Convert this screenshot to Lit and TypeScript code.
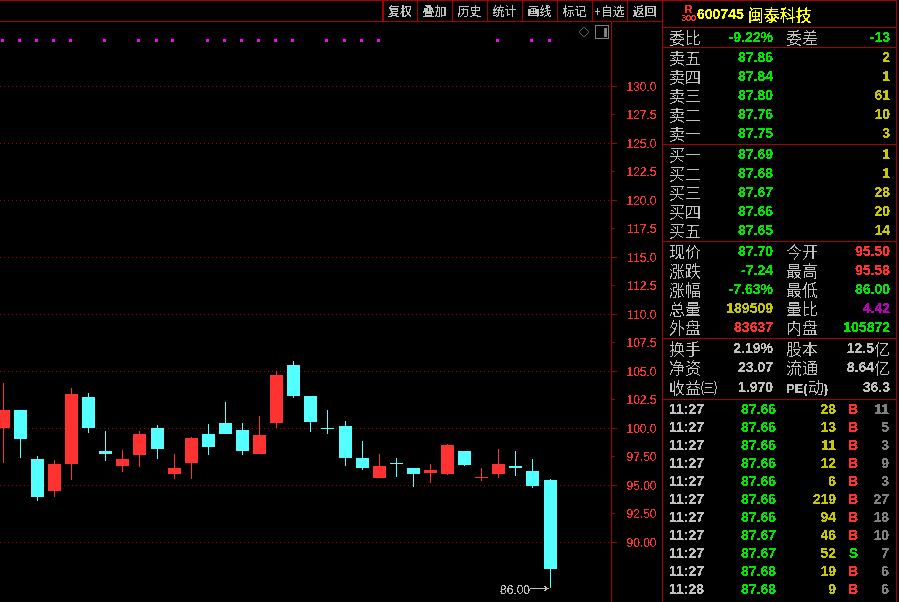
import { LitElement, html, css, svg } from "lit";
import { customElement } from "lit/decorators.js";

type C = [number, number, number, number, number, 0 | 1];
// x-left, body top, body bottom, wick top, wick bottom, red?
const candles: C[] = [
  [-3, 410, 428, 383, 463, 1],
  [14, 410, 439, 410, 458, 0],
  [31, 459, 497, 456, 501, 0],
  [48, 464, 491, 460, 497, 1],
  [65, 394, 464, 388, 480, 1],
  [82, 397, 428, 393, 433, 0],
  [99, 451, 454, 431, 461, 0],
  [116, 459, 466, 450, 472, 1],
  [133, 434, 455, 431, 467, 1],
  [151, 428, 449, 425, 459, 0],
  [168, 468, 474, 454, 479, 1],
  [185, 438, 463, 437, 479, 1],
  [202, 434, 447, 424, 455, 0],
  [219, 423, 434, 402, 434, 0],
  [236, 430, 451, 423, 455, 0],
  [253, 435, 454, 416, 454, 1],
  [270, 375, 423, 371, 428, 1],
  [287, 365, 396, 361, 398, 0],
  [304, 396, 422, 396, 432, 0],
  [321, 428, 429, 410, 434, 0],
  [339, 426, 458, 421, 466, 0],
  [356, 458, 468, 441, 470, 0],
  [373, 466, 478, 454, 478, 1],
  [390, 463, 464, 458, 477, 0],
  [407, 468, 474, 468, 487, 0],
  [424, 470, 473, 464, 483, 1],
  [441, 445, 474, 444, 475, 1],
  [458, 451, 465, 451, 466, 0],
  [475, 477, 478, 468, 481, 1],
  [492, 464, 474, 449, 478, 1],
  [509, 466, 468, 451, 476, 0],
  [526, 471, 486, 459, 488, 0],
  [544, 480, 569, 479, 588, 0],
];
const dots = [1, 18, 35, 52, 69, 103, 137, 155, 171, 206, 223, 240, 257, 274, 291, 325, 343, 360, 377, 496, 530, 548];
const axis = ["130.0", "127.5", "125.0", "122.5", "120.0", "117.5", "115.0", "112.5", "110.0", "107.5", "105.0", "102.5", "100.0", "97.50", "95.00", "92.50", "90.00"];
const tools = ["复权", "叠加", "历史", "统计", "画线", "标记", "+自选", "返回"];

const sell: [string, string, string][] = [
  ["卖五", "87.86", "2"], ["卖四", "87.84", "1"], ["卖三", "87.80", "61"], ["卖二", "87.76", "10"], ["卖一", "87.75", "3"],
];
const buy: [string, string, string][] = [
  ["买一", "87.69", "1"], ["买二", "87.68", "1"], ["买三", "87.67", "28"], ["买四", "87.66", "20"], ["买五", "87.65", "14"],
];
const stats: [string, string, string, string, string, string][] = [
  ["现价", "87.70", "g", "今开", "95.50", "r"],
  ["涨跌", "-7.24", "g", "最高", "95.58", "r"],
  ["涨幅", "-7.63%", "g", "最低", "86.00", "g"],
  ["总量", "189509", "y", "量比", "4.42", "m"],
  ["外盘", "83637", "r", "内盘", "105872", "g"],
];
const fin: [string, string, string, string][] = [
  ["换手", "2.19%", "股本", "12.5亿"],
  ["净资", "23.07", "流通", "8.64亿"],
  ["收益㈢", "1.970", "PE(动)", "36.3"],
];
const trades: [string, string, string, string, string][] = [
  ["11:27", "87.66", "28", "B", "11"], ["11:27", "87.66", "13", "B", "5"], ["11:27", "87.66", "11", "B", "3"],
  ["11:27", "87.66", "12", "B", "9"], ["11:27", "87.66", "6", "B", "3"], ["11:27", "87.66", "219", "B", "27"],
  ["11:27", "87.66", "94", "B", "18"], ["11:27", "87.67", "46", "B", "10"], ["11:27", "87.67", "52", "S", "7"],
  ["11:27", "87.68", "19", "B", "6"], ["11:28", "87.68", "9", "B", "6"],
];

@customElement("app-root")
export class AppRoot extends LitElement {
  static styles = css`
    :host {
      display: block;
      width: 899px;
      height: 602px;
      background: #000;
      overflow: hidden;
      --line: #a80000;
      font-family: "Noto Sans CJK SC", sans-serif;
    }
    .defs { position: absolute; width: 0; height: 0; }
    .frame {
      display: flex;
      height: 601px;
      width: 897px;
      border-top: 1px solid var(--line);
    }
    .left {
      width: 662px;
      display: flex;
      flex-direction: column;
      border-right: 1px solid var(--line);
    }
    .toolbar {
      height: 20px;
      display: flex;
      justify-content: flex-end;
      border-bottom: 1px solid var(--line);
      flex: none;
    }
    .tool {
      box-sizing: border-box;
      width: 35px;
      padding-right: 1px;
      border-left: 1px solid var(--line);
      color: #c0c0c0;
      font-size: 12px;
      line-height: 20px;
      text-align: center;
      white-space: nowrap;
      filter: url(#crisp);
    }
    .tool:first-child { border-left-width: 2px; }
    .chart { display: block; flex: 1; }
    .chart text { font-family: "Liberation Sans", sans-serif; font-size: 12px; }
    .axis-t { fill: #ff3232; }
    .low-t { fill: #c0c0c0; }
    .panel {
      width: 233px;
      display: flex;
      flex-direction: column;
      border-right: 1px solid var(--line);
    }
    .sec { border-bottom: 1px solid var(--line); flex: none; filter: url(#crisp); }
    .head {
      height: 26px;
      display: flex;
      align-items: center;
      color: #ffff00;
      padding-left: 18px;
    }
    .badge {
      width: 15px;
      display: flex;
      flex-direction: column;
      align-items: center;
      color: #ff3232;
      font-family: "Liberation Sans", sans-serif;
      line-height: 9px;
      margin-right: 1px;
    }
    .badge b { font-size: 11px; }
    .badge span { font-size: 9px; letter-spacing: -0.2px; }
    .code { font: 700 14px/1 "Liberation Sans", sans-serif; }
    .name { font-size: 16px; margin-left: 4px; line-height: 20px; }
    .pad { padding-bottom: 1px; }
    .pad3 { padding-bottom: 3px; }
    .row {
      height: 19px;
      display: grid;
      grid-template-columns: 104px 104px;
      column-gap: 13px;
      padding-left: 6px;
    }
    .cell {
      display: flex;
      justify-content: space-between;
      align-items: center;
      font-size: 16px;
      color: #c0c0c0;
      white-space: nowrap;
    }
    .lab { line-height: 19px; font-weight: 300; }
    .lat { font: 700 13px/19px "Liberation Sans", sans-serif; }
    .num { font: 700 14px/19px "Liberation Sans", sans-serif; }
    .yi { font: 300 16px/19px "Noto Sans CJK SC", sans-serif; }
    .mix { display: inline-flex; align-items: center; }
    .g { color: #00e600; }
    .r { color: #ff3232; }
    .y { color: #c8c800; }
    .m { color: #c000c0; }
    .w { color: #c0c0c0; }
    .k { color: #808080; }
    .tr {
      height: 18px;
      display: grid;
      grid-template-columns: 70px 37px 60px 22px 31px;
      padding-left: 6px;
      font: 700 14px/18px "Liberation Sans", sans-serif;
      color: #c0c0c0;
      filter: url(#crisp);
    }
    .tr > span:not(:first-child) { text-align: right; }
  `;

  private chart() {
    const H = 580;
    return html`<svg class="chart" width="662" height="${H}" viewBox="0 22 662 ${H}" shape-rendering="crispEdges">
      <line x1="611.5" y1="22" x2="611.5" y2="602" stroke="#a80000" />
      ${[86, 143, 200, 257, 314, 371, 428, 485, 542].map(
        (y) => svg`<line x1="0" y1="${y + 0.5}" x2="611" y2="${y + 0.5}" stroke="#a80000" stroke-dasharray="1 3" />`
      )}
      ${axis.map((t, i) => {
        const y = 86 + i * 28.5;
        const ly = Math.floor(y);
        const len = i % 2 === 0 ? 5 : 3;
        return svg`<line x1="612" y1="${ly + 0.5}" x2="${612 + len}" y2="${ly + 0.5}" stroke="#a80000" />
          <text class="axis-t" x="656.5" y="${ly + 5}" text-anchor="end" filter="url(#crisp)">${t}</text>`;
      })}
      ${dots.map((x) => svg`<rect x="${x}" y="39" width="3" height="3" fill="#ff00ff" />`)}
      ${candles.map(([x, t, b, wt, wb, red]) => {
        const col = red ? "#ff3232" : "#54ffff";
        return svg`<rect x="${x + 6}" y="${wt}" width="1" height="${wb - wt}" fill="${col}" />
          <rect x="${x}" y="${t}" width="13" height="${b - t}" fill="${col}" />`;
      })}
      <polygon points="584,27 589,32 584,37 579,32" fill="none" stroke="#666" shape-rendering="auto" />
      <rect x="595.5" y="25.5" width="13" height="13" fill="none" stroke="#808080" />
      <rect x="604" y="28" width="3" height="9" fill="#808080" />
      <text class="low-t" x="500" y="594" filter="url(#crisp)">86.00</text>
      <path d="M530 588.5H548M544 586l4 2.5-4 2.5" fill="none" stroke="#c0c0c0" />
    </svg>`;
  }

  private book(rows: [string, string, string][]) {
    return rows.map(
      ([l, p, q]) => html`<div class="row">
        <div class="cell"><span class="lab">${l}</span><span class="num g">${p}</span></div>
        <div class="cell"><span></span><span class="num y">${q}</span></div>
      </div>`
    );
  }

  private finLabel(c: string) {
    return c.startsWith("PE") ? html`<span class="lat">PE(</span>动<span class="lat">)</span>` : c;
  }

  render() {
    return html`
      <svg class="defs" aria-hidden="true">
        <filter id="crisp" x="0" y="0" width="100%" height="100%" color-interpolation-filters="sRGB">
          <feComponentTransfer>
            <feFuncA type="discrete" tableValues="0 0 1 1 1"></feFuncA>
          </feComponentTransfer>
        </filter>
      </svg>
      <div class="frame">
        <div class="left">
          <div class="toolbar">${tools.map((t) => html`<div class="tool">${t}</div>`)}</div>
          ${this.chart()}
        </div>
        <div class="panel">
          <div class="sec head">
            <div class="badge"><b>R</b><span>300</span></div>
            <span class="code">600745</span><span class="name">闽泰科技</span>
          </div>
          <div class="sec">
            <div class="row">
              <div class="cell"><span class="lab">委比</span><span class="num g">-9.22%</span></div>
              <div class="cell"><span class="lab">委差</span><span class="num g">-13</span></div>
            </div>
          </div>
          <div class="sec pad">${this.book(sell)}</div>
          <div class="sec pad">${this.book(buy)}</div>
          <div class="sec pad">
            ${stats.map(
              ([a, b, c, d, e, f]) => html`<div class="row">
                <div class="cell"><span class="lab">${a}</span><span class="num ${c}">${b}</span></div>
                <div class="cell"><span class="lab">${d}</span><span class="num ${f}">${e}</span></div>
              </div>`
            )}
          </div>
          <div class="sec pad3">
            ${fin.map(([a, b, c, d]) => {
              const hasYi = d.endsWith("亿");
              return html`<div class="row">
                <div class="cell"><span class="lab">${a}</span><span class="num w">${b}</span></div>
                <div class="cell"><span class="lab">${this.finLabel(c)}</span>
                  <span class="mix"><span class="num w">${hasYi ? d.slice(0, -1) : d}</span>${hasYi ? html`<span class="yi">亿</span>` : ""}</span>
                </div>
              </div>`;
            })}
          </div>
          <div>
            ${trades.map(
              ([t, p, v, f, n]) => html`<div class="tr">
                <span>${t}</span><span class="g">${p}</span><span class="y">${v}</span>
                <span class="${f === "B" ? "r" : "g"}">${f}</span><span class="k">${n}</span>
              </div>`
            )}
          </div>
        </div>
      </div>
    `;
  }
}
